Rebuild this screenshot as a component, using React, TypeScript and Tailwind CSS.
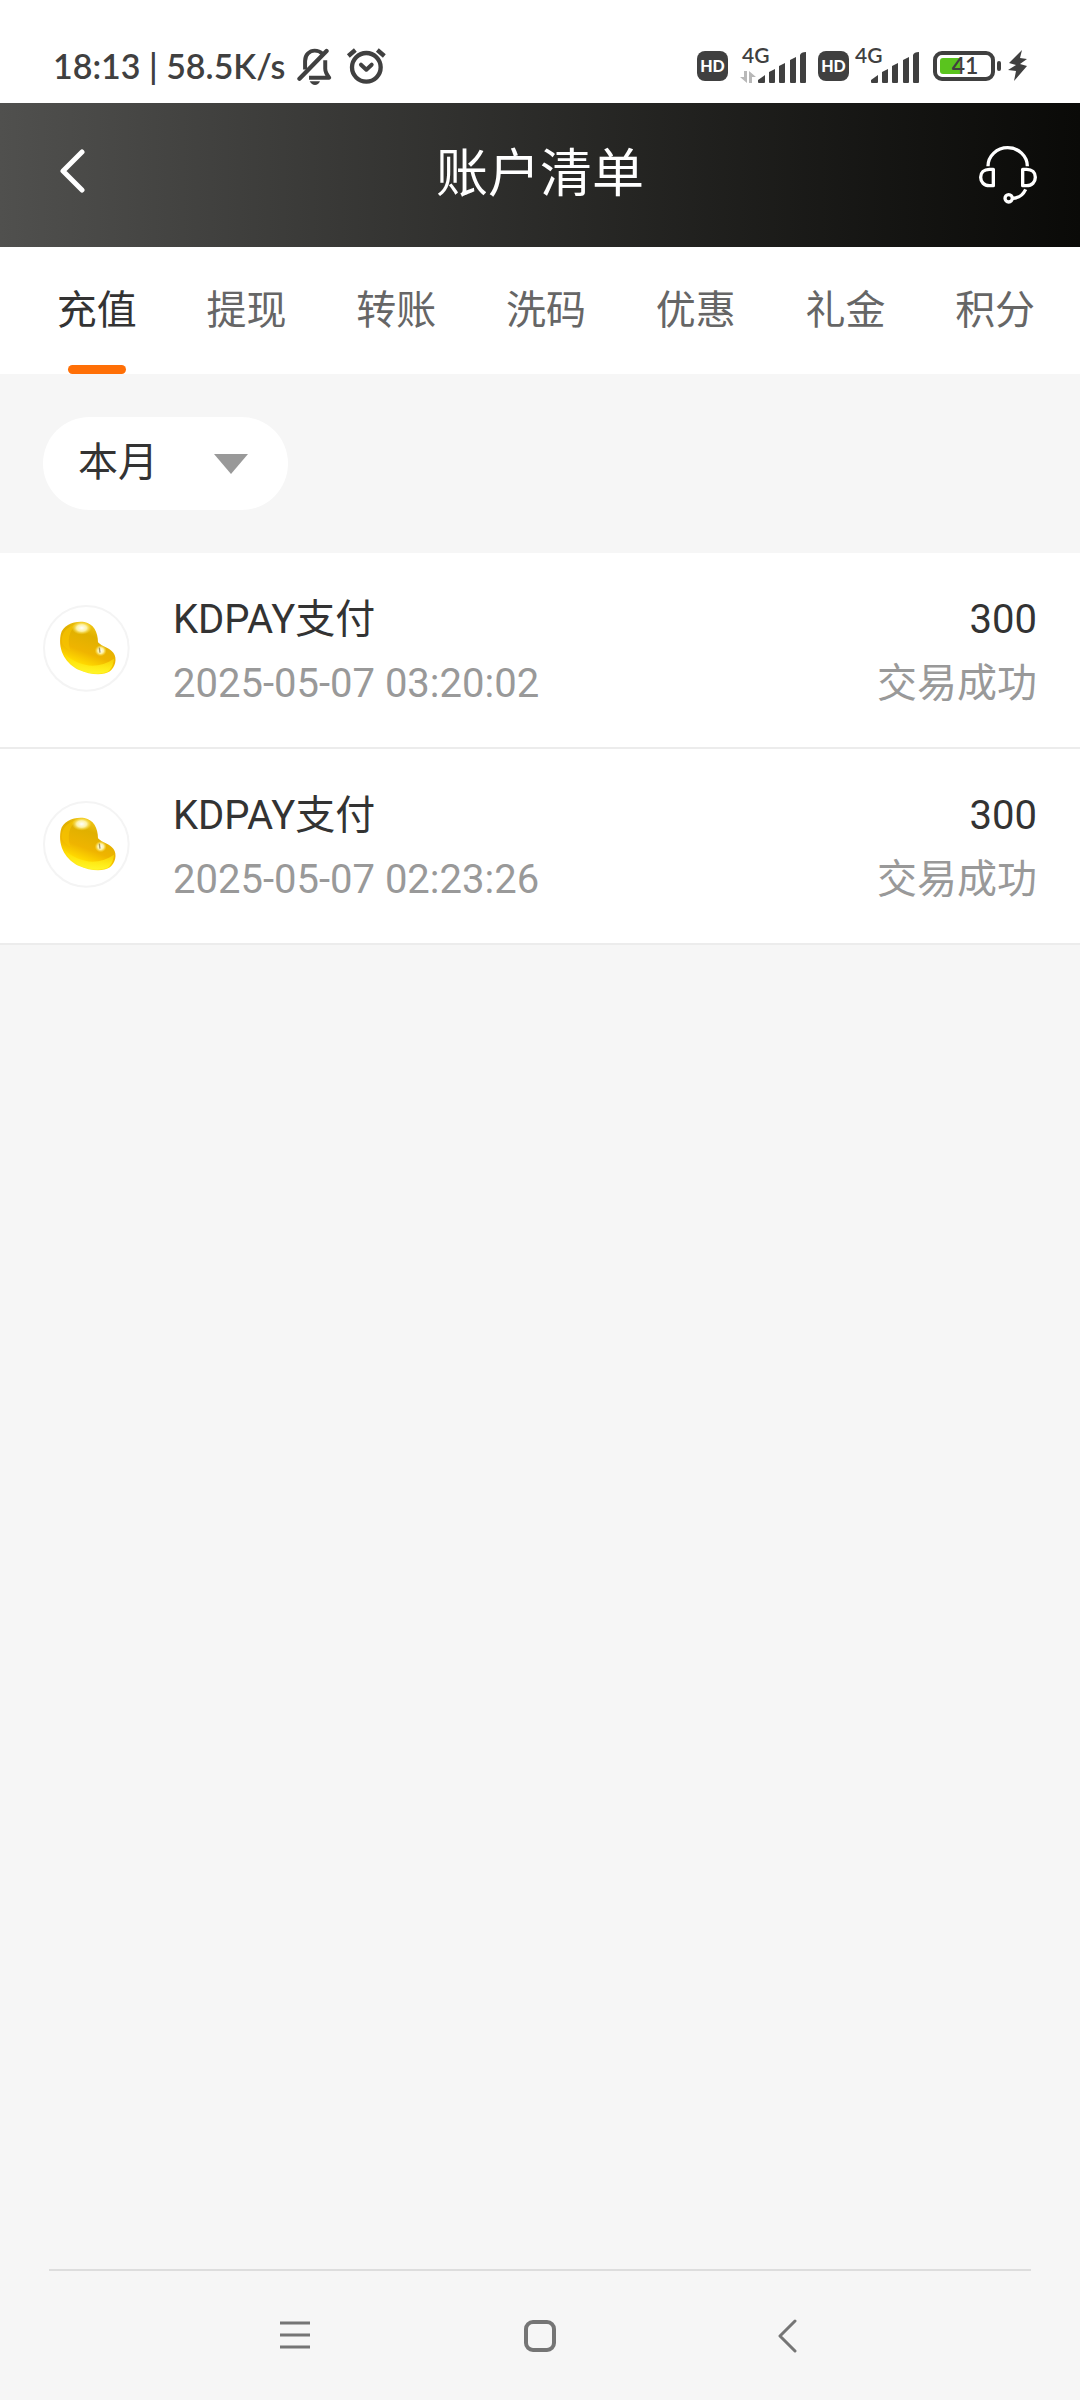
// AccountList.tsx
import { useState } from "react";

interface RecordItem {
  id: number;
  title: string;
  time: string;
  amount: string;
  status: string;
}

const tabs = ["充值", "提现", "转账", "洗码", "优惠", "礼金", "积分"];

const records: RecordItem[] = [
  {
    id: 1,
    title: "KDPAY支付",
    time: "2025-05-07 03:20:02",
    amount: "300",
    status: "交易成功",
  },
  {
    id: 2,
    title: "KDPAY支付",
    time: "2025-05-07 02:23:26",
    amount: "300",
    status: "交易成功",
  },
];

function BellOffIcon() {
  return (
    <svg className="h-[38px] w-[35px]" viewBox="0 0 105 115" fill="none" stroke="#404040" strokeWidth="12" strokeLinecap="round" strokeLinejoin="round">
      <path d="M24 68V42C24 23 38 11 53 11C62 11 70 14 76 20" strokeLinecap="butt" />
      <path d="M89 12L7 96" strokeWidth="13" />
      <path d="M85 40V66C85 76 90 84 97 93H36" strokeLinecap="butt" />
      <path d="M38 104H69C67 111 60 115 54 115S41 111 38 104Z" fill="#404040" stroke="none" />
    </svg>
  );
}

function AlarmIcon() {
  return (
    <svg className="h-[38px] w-10" viewBox="0 0 120 114" fill="none" stroke="#404040" strokeWidth="13" strokeLinecap="round" strokeLinejoin="round">
      <circle cx="61" cy="61" r="43" />
      <path d="M45 53L61 68L77 53" strokeWidth="12" />
      <path d="M7 27L28 9M94 9L115 27" strokeLinecap="butt" />
    </svg>
  );
}

function HdBadge() {
  return (
    <span className="flex h-[30px] w-[31px] items-center justify-center rounded-lg bg-[#404040] text-base leading-none font-black text-white">
      HD
    </span>
  );
}

function Signal({ arrows = false }: { arrows?: boolean }) {
  return (
    <div className="relative flex h-9 w-[66px] items-end justify-end">
      <span className="absolute top-0 left-[2px] text-[21px] leading-[16px] font-semibold">4G</span>
      {arrows && (
        <svg className="mr-[2px] h-3 w-4" viewBox="0 0 16 12" fill="#b8b8b8">
          <path d="M4 0H7V12L0 6H4Z" />
          <path d="M9 12V0L16 6H12V12Z" />
        </svg>
      )}
      <svg className="h-[31px] w-12" viewBox="0 0 48 31" fill="#404040">
        <path d="M0 28L7 23V30Q7 31 6 31H1Q0 31 0 30Z" />
        <path d="M11 20L17 17V30Q17 31 16 31H12Q11 31 11 30Z" />
        <path d="M21 14L27 11V30Q27 31 26 31H22Q21 31 21 30Z" />
        <path d="M32 8L38 5V30Q38 31 37 31H33Q32 31 32 30Z" />
        <path d="M42 3Q43 0 48 0V30Q48 31 47 31H43Q42 31 42 30Z" />
      </svg>
    </div>
  );
}

function Battery() {
  return (
    <div className="relative h-[30px] w-[69px]">
      <svg className="h-[30px] w-[69px]" viewBox="0 0 69 30">
        <rect x="2" y="2" width="58" height="26" rx="7" fill="none" stroke="#404040" strokeWidth="4" />
        <path d="M10 7H27V23H10Q7 23 7 20V10Q7 7 10 7Z" fill="#5ac41e" />
        <rect x="64" y="10" width="4" height="10" rx="2" fill="#404040" />
      </svg>
      <span className="absolute inset-y-0 left-0 flex w-[64px] items-center justify-center text-[23px] leading-none font-semibold">41</span>
    </div>
  );
}

function HeadsetIcon() {
  return (
    <svg className="h-[60px] w-[60px]" viewBox="0 0 180 180" fill="none" stroke="white" strokeWidth="10" strokeLinejoin="round">
      <path d="M30 64A59 56 0 0 1 148 64" />
      <path d="M46 73V122H34C18 122 8 111 8 97S18 73 34 73Z" />
      <path d="M134 73V122H146C162 122 172 111 172 97S162 73 146 73Z" />
      <path d="M143 133C136 148 122 159 104 160" />
      <circle cx="92" cy="160" r="11" />
    </svg>
  );
}

function BeanIcon({ id }: { id: number }) {
  const bean =
    "M92 134C98 104 134 92 163 96C190 101 204 125 204 157C217 171 238 173 250 188C263 206 255 231 240 244C219 258 180 255 147 240C110 222 83 184 92 134Z";
  return (
    <svg className="mt-[17px] h-[87px] w-[87px] shrink-0" viewBox="39 45 261 261">
      <defs>
        <linearGradient id={`body-${id}`} x1="0.75" y1="0" x2="0.35" y2="1">
          <stop offset="0" stopColor="#f8d020" />
          <stop offset="0.3" stopColor="#e0b000" />
          <stop offset="0.6" stopColor="#efb400" />
          <stop offset="0.8" stopColor="#ffd800" />
          <stop offset="1" stopColor="#fff53a" />
        </linearGradient>
        <linearGradient id={`rim-${id}`} x1="0" y1="0" x2="0" y2="1">
          <stop offset="0" stopColor="#ffe600" stopOpacity="0.3" />
          <stop offset="1" stopColor="#fff62a" />
        </linearGradient>
        <radialGradient id={`shine-${id}`}>
          <stop offset="0" stopColor="#ffffff" />
          <stop offset="0.5" stopColor="#fff8b8" stopOpacity="0.9" />
          <stop offset="1" stopColor="#ffe54a" stopOpacity="0" />
        </radialGradient>
      </defs>
      <circle cx="169" cy="175" r="127" fill="white" stroke="#f4f4f4" strokeWidth="6" />
      <path d={bean} fill={`url(#body-${id})`} />
      <path d="M95 150C96 122 120 106 140 102C118 122 110 150 122 182C106 174 94 164 95 150Z" fill="#f8c600" opacity="0.6" />
      <path d="M102 190C148 234 206 238 252 206C250 226 242 240 230 247C196 257 160 248 138 232C120 220 108 206 102 190Z" fill={`url(#rim-${id})`} />
      <ellipse cx="155" cy="114" rx="30" ry="20" fill={`url(#shine-${id})`} />
      <ellipse cx="212" cy="182" rx="18" ry="17" fill={`url(#shine-${id})`} />
      <path d="M208 173L210 188" stroke="#a89860" strokeWidth="4" />
    </svg>
  );
}

export default function AccountList() {
  const [activeTab, setActiveTab] = useState("充值");
  const [period, setPeriod] = useState("本月");

  return (
    <div className="flex min-h-screen flex-col bg-[#f6f6f6] font-['Roboto','Noto_Sans_CJK_SC',sans-serif] text-[40px] text-[#333333]">
      {/* Status bar */}
      <div className="flex h-[103px] items-center justify-between bg-white pt-7 pr-[52px] pl-[53px] font-['Lato',sans-serif] text-[#404040]">
        <div className="flex items-center">
          <span className="text-[34px] leading-10 font-semibold whitespace-nowrap">18:13 | 58.5K/s</span>
          <span className="ml-3">
            <BellOffIcon />
          </span>
          <span className="ml-[14px]">
            <AlarmIcon />
          </span>
        </div>
        <div className="flex items-center">
          <HdBadge />
          <span className="mr-3 mb-[2px] ml-3">
            <Signal arrows />
          </span>
          <HdBadge />
          <span className="mr-[14px] mb-[2px] ml-1">
            <Signal />
          </span>
          <Battery />
          <svg className="ml-[6px] h-[31px] w-5" viewBox="0 0 20 31" fill="#404040">
            <path d="M14 0L1 13L8 15L0 20L8 21L6 31L19 16L12 14L19 9L12 8Z" />
          </svg>
        </div>
      </div>

      {/* Header */}
      <header className="flex h-36 items-center justify-between bg-linear-to-r from-[#50504e] to-[#0a0a08] px-[42px] text-white">
        <button aria-label="返回" className="flex h-[60px] w-[60px] justify-center pt-1">
          <svg className="h-11 w-[26px]" viewBox="0 0 26 44" fill="none" stroke="white" strokeWidth="5" strokeLinecap="round" strokeLinejoin="round">
            <path d="M23 3L4 22L23 41" />
          </svg>
        </button>
        <h1 className="text-[52px] leading-[60px]">账户清单</h1>
        <button aria-label="客服">
          <HeadsetIcon />
        </button>
      </header>

      {/* Tabs */}
      <nav className="grid h-[127px] grid-cols-7 bg-white pr-[10px] pl-[22px]">
        {tabs.map((tab) => (
          <button
            key={tab}
            onClick={() => setActiveTab(tab)}
            className={`flex flex-col items-center justify-between leading-[60px] ${activeTab === tab ? "text-[#333333]" : "text-[#666666]"}`}
          >
            <span className="pt-[34px]">{tab}</span>
            <span className={`h-[9px] w-[58px] rounded-full ${activeTab === tab ? "bg-[#ff6f06]" : "bg-transparent"}`} />
          </button>
        ))}
      </nav>

      {/* Filter */}
      <div className="p-[43px]">
        <div className="relative h-[93px] w-[245px]">
          <select
            aria-label="时间"
            value={period}
            onChange={(e) => setPeriod(e.target.value)}
            className="h-full w-full appearance-none rounded-full bg-white pb-[2px] pl-[35px] leading-[60px]"
          >
            <option>今日</option>
            <option>本周</option>
            <option>本月</option>
          </select>
          <svg className="pointer-events-none absolute top-[37px] right-10 h-5 w-[34px]" viewBox="0 0 34 20" fill="#999999">
            <path d="M0 0H34L17 20Z" />
          </svg>
        </div>
      </div>

      {/* Records */}
      <ul>
        {records.map((item) => (
          <li key={item.id} className="flex items-start gap-[43px] border-b-2 border-[#ececec] bg-white px-[43px] pt-[35px] pb-[31px]">
            <BeanIcon id={item.id} />
            <div className="flex-1 leading-[64px]">
              <p>{item.title}</p>
              <p className="text-[#999999]">{item.time}</p>
            </div>
            <div className="text-right leading-[64px]">
              <p>{item.amount}</p>
              <p className="text-[#999999]">{item.status}</p>
            </div>
          </li>
        ))}
      </ul>

      {/* System navigation */}
      <div className="mx-[49px] mt-auto flex h-[131px] items-center justify-center gap-[166px] border-t-2 border-[#dddddd]">
        <button aria-label="菜单" className="flex h-20 w-20 items-center justify-center">
          <svg className="h-[34px] w-8" viewBox="0 0 32 34" fill="none" stroke="#757575" strokeWidth="3">
            <path d="M2 4H32M2 16H32M2 28H32" />
          </svg>
        </button>
        <button aria-label="主页" className="flex h-20 w-20 items-center justify-center">
          <svg className="h-8 w-8" viewBox="0 0 32 32" fill="none" stroke="#757575" strokeWidth="4">
            <rect x="2" y="2" width="28" height="28" rx="7" />
          </svg>
        </button>
        <button aria-label="后退" className="flex h-20 w-20 items-center justify-center">
          <svg className="h-[34px] w-[22px]" viewBox="0 0 22 34" fill="none" stroke="#757575" strokeWidth="3" strokeLinecap="round" strokeLinejoin="round">
            <path d="M20 2L5 17L20 32" />
          </svg>
        </button>
      </div>
    </div>
  );
}
